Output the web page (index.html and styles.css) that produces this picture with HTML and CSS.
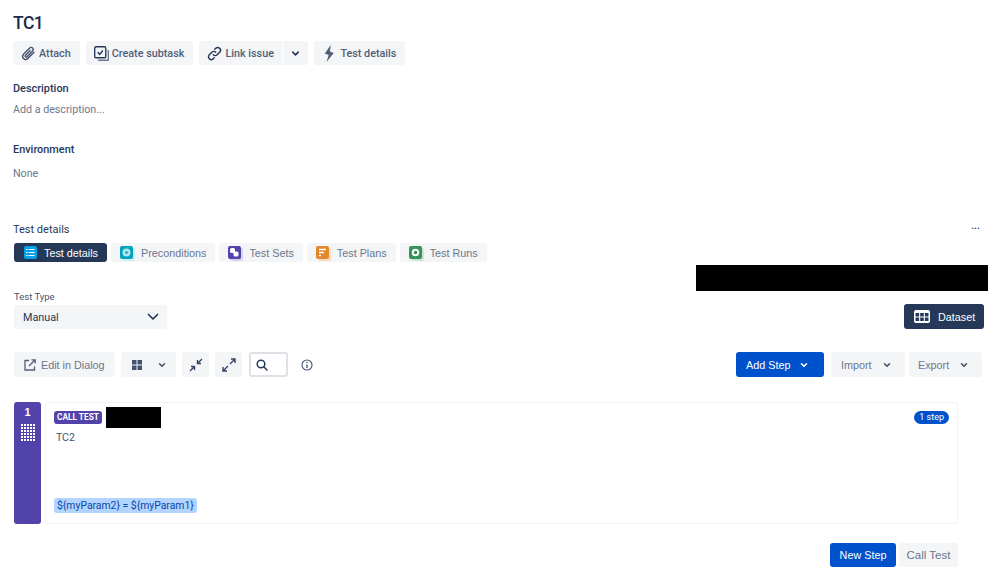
FILE: index.html
```html
<!DOCTYPE html>
<html lang="en">
<head>
<meta charset="utf-8">
<title>TC1</title>
<link rel="stylesheet" href="styles.css">
</head>
<body>
<main class="page">
  <h1 class="title">TC1</h1>
  <div class="actions">
    <button class="act"><svg viewBox="0 0 20 20" fill="none" stroke="#42526e" stroke-width="1.6" stroke-linecap="round"><path d="M16.5 8.5l-7 7.2c-1.6 1.6-4 1.7-5.400.3-1.400-1.400-1.300-3.700.3-5.300l6.700-6.900c1.100-1.100 2.700-1.200 3.700-.2s.9 2.600-.2 3.700l-6.300 6.500c-.6.6-1.400.6-1.900.1s-.4-1.300.2-1.900l5.400-5.600"/></svg>Attach</button>
    <button class="act"><svg viewBox="0 0 20 20" fill="none" stroke="#253858" stroke-width="1.600"><rect x="2" y="2" width="13" height="13" rx="1.500"/><path d="M5.500 8.500l2.500 2.500 3.500-4.500"/><path d="M18 6v11.500a.5.500 0 0 1-.5.500H6" stroke="#6b778c"/></svg>Create subtask</button>
    <div class="split">
      <button class="act act-left"><svg viewBox="0 0 20 20" fill="none" stroke="#253858" stroke-width="1.700" stroke-linecap="round"><path d="M8.500 11.500a3.200 3.200 0 0 0 4.600 0l3-3a3.200 3.200 0 0 0-4.600-4.600l-1.200 1.200"/><path d="M11.500 8.500a3.200 3.200 0 0 0-4.600 0l-3 3a3.200 3.200 0 0 0 4.600 4.600l1.200-1.200"/></svg>Link issue</button>
      <button class="act act-right"><svg viewBox="0 0 10 10" fill="none" stroke="#253858" stroke-width="1.800" stroke-linecap="round" stroke-linejoin="round"><path d="M2 3.500L5 6.500 8 3.500"/></svg></button>
    </div>
    <button class="act"><svg viewBox="0 0 16 20"><path d="M9.500 0L2.500 10l4.500 1.800L4.500 20l8.500-10.500-4.500-1.800z" fill="#505f79"/></svg>Test details</button>
  </div>

  <h2 class="label lab-desc">Description</h2>
  <p class="muted add">Add a description...</p>
  <h2 class="label lab-env">Environment</h2>
  <p class="muted none">None</p>

  <div class="panel-head">
    <span class="panel-title">Test details</span>
    <span class="dots">•••</span>
  </div>

  <div class="tabs">
    <span class="tab tab-on"><span class="tab-ico ico-blue"><svg width="9" height="9" viewBox="0 0 9 9" fill="none" stroke="#fff"><path d="M2.500 1.500H8.500M2.500 4.500H8.500M2.500 7.500H8.500M0 1.500H1.500M0 4.500H1.500M0 7.500H1.500"/></svg></span>Test details</span>
    <span class="tab"><span class="tab-ico ico-teal"><svg width="9" height="9" viewBox="0 0 9 9"><circle cx="4.500" cy="4.500" r="4" fill="#b3e6ec"/><path d="M3.500 2.500L6.500 4.500 3.500 6.500z" fill="#00a3bf"/></svg></span>Preconditions</span>
    <span class="tab"><span class="tab-ico ico-purple"><svg width="9" height="9" viewBox="0 0 9 9" fill="#fff"><rect x="0" y="0" width="5" height="5" rx="1.500"/><rect x="3.500" y="3.500" width="5" height="5" rx="1.500"/></svg></span>Test Sets</span>
    <span class="tab"><span class="tab-ico ico-orange"><svg width="9" height="9" viewBox="0 0 9 9" fill="none" stroke="#fff" stroke-width="1.300"><path d="M1 1.500H8M1 4.500H6M1 7.500H3"/></svg></span>Test Plans</span>
    <span class="tab"><span class="tab-ico ico-green"><svg width="9" height="9" viewBox="0 0 9 9" fill="none" stroke="#fff" stroke-width="2"><circle cx="4.500" cy="4.500" r="2.800"/></svg></span>Test Runs</span>
  </div>

  <div class="redact-row"><div class="redact-wide"></div></div>

  <div class="type-row">
    <div class="type-field">
      <div class="type-label">Test Type</div>
      <div class="select">Manual<svg width="12" height="12" viewBox="0 0 12 12" fill="none" stroke="#253858" stroke-width="1.700" stroke-linecap="round" stroke-linejoin="round"><path d="M1.500 3.500L6 8 10.500 3.500"/></svg></div>
    </div>
    <button class="dark-btn"><svg width="16" height="13" viewBox="0 0 16 13"><rect width="16" height="13" rx="2" fill="#fff"/><g fill="#253858"><rect x="1.500" y="3" width="3.600" height="3.500"/><rect x="6.200" y="3" width="3.600" height="3.500"/><rect x="10.900" y="3" width="3.600" height="3.500"/><rect x="1.500" y="7.500" width="3.600" height="3.500"/><rect x="6.200" y="7.500" width="3.600" height="3.500"/><rect x="10.900" y="7.500" width="3.600" height="3.500"/></g></svg>Dataset</button>
  </div>

  <div class="toolbar">
    <button class="tool tool-edit"><svg width="12" height="12" viewBox="0 0 12 12" fill="none" stroke="#505f79" stroke-width="1.300"><path d="M5 1.500H1v9.500h9.500V7.500"/><path d="M5 7l6-6M7.500 .8h3.700v3.700"/></svg>Edit in Dialog</button>
    <button class="tool tool-grid"><svg width="12" height="12" viewBox="0 0 12 12" fill="#42526e"><rect x="1" y="1" width="4.500" height="4.500"/><rect x="6.500" y="1" width="4.500" height="4.500"/><rect x="1" y="6.500" width="4.500" height="4.500"/><rect x="6.500" y="6.500" width="4.500" height="4.500"/></svg><svg width="10" height="10" viewBox="0 0 10 10" fill="none" stroke="#42526e" stroke-width="1.600" stroke-linecap="round" stroke-linejoin="round"><path d="M2.500 3.800L5 6.300 7.500 3.800"/></svg></button>
    <button class="tool tool-sq"><svg width="14" height="14" viewBox="0 0 14 14" fill="none" stroke="#344563" stroke-width="1.400"><path d="M13 1L8.500 5.500M8.500 2v3.500H12M1 13l4.500-4.500M2 8.500h3.500V12"/></svg></button>
    <button class="tool tool-sq"><svg width="14" height="14" viewBox="0 0 14 14" fill="none" stroke="#344563" stroke-width="1.400"><path d="M8 6l5-5M9 1h4v4M6 8l-5 5M1 9v4h4"/></svg></button>
    <div class="search"><svg width="12" height="12" viewBox="0 0 12 12" fill="none" stroke="#253858" stroke-width="1.500" stroke-linecap="round"><circle cx="5" cy="5" r="3.800"/><path d="M8 8l3 3"/></svg></div>
    <svg class="info" width="12" height="12" viewBox="0 0 12 12" fill="none" stroke="#42526e" stroke-width="1.100"><circle cx="6" cy="6" r="5"/><path d="M6 5.500V9" stroke-width="1.300"/><circle cx="6" cy="3.500" r=".7" fill="#42526e" stroke="none"/></svg>
    <div class="tool-right">
      <button class="tool tool-add">Add Step<svg width="10" height="10" viewBox="0 0 10 10" fill="none" stroke="#fff" stroke-width="1.600" stroke-linecap="round" stroke-linejoin="round"><path d="M2.500 3.800L5 6.300 7.500 3.800"/></svg></button>
      <button class="tool tool-drop">Import<svg width="10" height="10" viewBox="0 0 10 10" fill="none" stroke="#42526e" stroke-width="1.600" stroke-linecap="round" stroke-linejoin="round"><path d="M2.500 3.800L5 6.300 7.500 3.800"/></svg></button>
      <button class="tool tool-drop tool-export">Export<svg width="10" height="10" viewBox="0 0 10 10" fill="none" stroke="#42526e" stroke-width="1.600" stroke-linecap="round" stroke-linejoin="round"><path d="M2.500 3.800L5 6.300 7.500 3.800"/></svg></button>
    </div>
  </div>

  <section class="step">
    <div class="step-side">
      <span class="step-num">1</span>
      <span class="step-grip"><i></i><i></i><i></i><i></i><i></i><i></i><i></i><i></i><i></i><i></i><i></i><i></i><i></i><i></i><i></i><i></i><i></i><i></i><i></i><i></i><i></i><i></i><i></i><i></i><i></i><i></i><i></i><i></i><i></i><i></i></span>
    </div>
    <div class="step-card">
      <div class="step-top">
        <span class="badge-call">CALL TEST</span>
        <span class="redact-small"></span>
        <span class="badge-count">1 step</span>
      </div>
      <div class="step-name">TC2</div>
      <span class="param">${myParam2} = ${myParam1}</span>
    </div>
  </section>

  <div class="foot">
    <button class="tool tool-new">New Step</button>
    <button class="tool tool-call">Call Test</button>
  </div>
</main>
</body>
</html>
```
FILE: styles.css
```css
* { box-sizing: border-box; }
html, body { margin: 0; padding: 0; background: #fff; }
body { width: 999px; height: 584px; overflow: hidden; font-family: Roboto, "Noto Sans", sans-serif; color: #172b4d; }
button { font: inherit; border: 0; margin: 0; cursor: pointer; }
svg { display: block; flex: none; }

.page { padding: 0 15px 0 13px; }
.title { margin: 0; padding-top: 10px; height: 41px; font-size: 17.500px; line-height: 26px; font-weight: 500; color: #172b4d; letter-spacing: -.5px; }

.actions { display: flex; gap: 6px; height: 24px; }
.act { display: flex; align-items: center; gap: 2px; height: 24px; padding: 0 9px 0 7px; background: #f4f5f7; border-radius: 3px; font-size: 10.800px; font-weight: 500; color: #505f79; white-space: nowrap; }
.act svg { width: 17px; height: 17px; }
.split { display: flex; gap: 1px; }
.act-left { border-radius: 3px 0 0 3px; width: 83px; }
.act-right { border-radius: 0 3px 3px 0; width: 25px; justify-content: center; padding: 0; }
.act-right svg { width: 9px; height: 9px; }

.label { margin: 0; font-size: 10.900px; line-height: 16px; font-weight: 500; color: #253858; }
.lab-desc { margin-top: 16px; }
.lab-env { margin-top: 24px; }
.muted { margin: 0; font-size: 10.700px; line-height: 16px; color: #6b778c; }
.add { margin-top: 5px; }
.none { margin-top: 8px; }

.panel-head { display: flex; justify-content: space-between; align-items: center; margin-top: 39px; height: 16px; padding-right: 4px; }
.panel-title { font-size: 11px; color: #253858; }
.dots { font-size: 7px; letter-spacing: .5px; color: #253858; }

.tabs { display: flex; gap: 4px; margin-top: 6px; height: 20px; font-family: "Liberation Sans", Arial, sans-serif; padding-left: 1px; }
.tab { display: flex; align-items: center; gap: 8px; height: 19px; padding: 0 9px; background: #f4f5f7; border-radius: 3px; font-size: 10.800px; color: #6b778c; white-space: nowrap; }
.tab-on { background: #253858; color: #fff; padding: 0 9px 0 10px; gap: 7px; }
.tab-ico { width: 13px; height: 13px; border-radius: 2px; display: flex; align-items: center; justify-content: center; }
.ico-blue { background: #00a3e8; }
.ico-teal { background: #00a3bf; box-shadow: 2px 2px 0 #cdeef2; }
.ico-purple { background: #5243aa; box-shadow: 2px 2px 0 #d5d0ee; }
.ico-orange { background: #e08a2c; box-shadow: 2px 2px 0 #f8dcc0; }
.ico-green { background: #36915a; box-shadow: 2px 2px 0 #c8e6d2; }

.redact-row { display: flex; justify-content: flex-end; margin-top: 2px; margin-right: -4px; }
.redact-wide { width: 292px; height: 26px; background: #000; }

.type-row { display: flex; justify-content: space-between; align-items: flex-end; }
.type-field { margin-left: 1px; }
.type-label { font-size: 9.500px; line-height: 11px; color: #42526e; }
.select { display: flex; align-items: center; justify-content: space-between; width: 153px; height: 24px; margin-top: 3px; padding: 0 8px 0 9px; background: #f4f5f7; border-radius: 3px; font-size: 10.800px; color: #253858; }
.dark-btn { display: flex; align-items: center; gap: 8px; width: 80px; height: 25px; padding: 0 10px; background: #253858; color: #fff; border-radius: 3px; font-family: "Liberation Sans", Arial, sans-serif; font-size: 10.800px; }

.toolbar { display: flex; align-items: center; gap: 6px; height: 25px; margin: 23px 2px 0 1px; }
.tool { display: flex; align-items: center; height: 25px; background: #f4f5f7; border-radius: 3px; font-family: "Liberation Sans", Arial, sans-serif; font-size: 10.800px; color: #6b778c; white-space: nowrap; }
.tool-edit { width: 101px; padding: 0 0 0 10px; gap: 5px; }
.tool-grid { width: 55px; padding: 0 0 0 10px; gap: 14px; }
.tool-sq { width: 27px; justify-content: center; }
.search { width: 39px; height: 25px; padding: 0 0 0 5px; margin-left: 1px; display: flex; align-items: center; border: 2px solid #dfe1e6; border-radius: 3px; }
.info { margin-left: 7px; }
.tool-right { display: flex; gap: 7px; margin-left: auto; }
.tool-add { width: 88px; padding: 0 0 0 10px; gap: 9px; background: #0052cc; color: #fff; }
.tool-drop { width: 74px; padding: 0 0 0 10px; gap: 10px; }
.tool-export { width: 73px; padding-left: 9px; margin-left: -3px; }

.step { display: flex; gap: 4px; height: 122px; margin-top: 25px; margin-left: 1px; width: 944px; }
.step-side { width: 27px; background: #5243aa; border-radius: 3px; display: flex; flex-direction: column; align-items: center; padding-top: 4px; color: #fff; }
.step-num { font-family: "Liberation Sans", Arial, sans-serif; font-size: 11px; line-height: 13px; font-weight: 700; }
.step-grip { display: grid; grid-template-columns: repeat(5, 2px); gap: 1px; margin-top: 5px; }
.step-grip i { width: 2px; height: 2px; background: #fff; display: block; }
.step-card { flex: 1; display: flex; flex-direction: column; align-items: flex-start; padding: 4px 8px 10px 8px; border: 1px solid #f2f3f5; border-radius: 3px; }
.step-top { display: flex; align-items: flex-start; width: 100%; }
.badge-call { margin-top: 4px; height: 13px; padding: 0 3px; background: #5243aa; color: #fff; border-radius: 3px; font-size: 8.300px; line-height: 13px; font-weight: 700; white-space: nowrap; }
.redact-small { width: 55px; height: 21px; background: #000; margin-left: 4px; }
.badge-count { margin: 4px 0 0 auto; height: 13px; padding: 0 5px; background: #0052cc; color: #fff; border-radius: 7px; font-size: 9px; line-height: 13px; white-space: nowrap; }
.step-name { margin: 3px 0 0 2px; font-size: 10.500px; line-height: 14px; color: #42526e; }
.param { margin-top: auto; height: 15px; padding: 0 3px; background: #b3d4ff; color: #0747a6; border-radius: 3px; font-size: 10.400px; line-height: 15px; white-space: nowrap; }

.foot { display: flex; justify-content: flex-end; gap: 3px; width: 945px; margin-top: 19px; }
.tool-new { width: 66px; justify-content: center; height: 24px; background: #0052cc; color: #fff; }
.tool-call { width: 59px; justify-content: center; height: 24px; font-size: 11.500px; }
```
